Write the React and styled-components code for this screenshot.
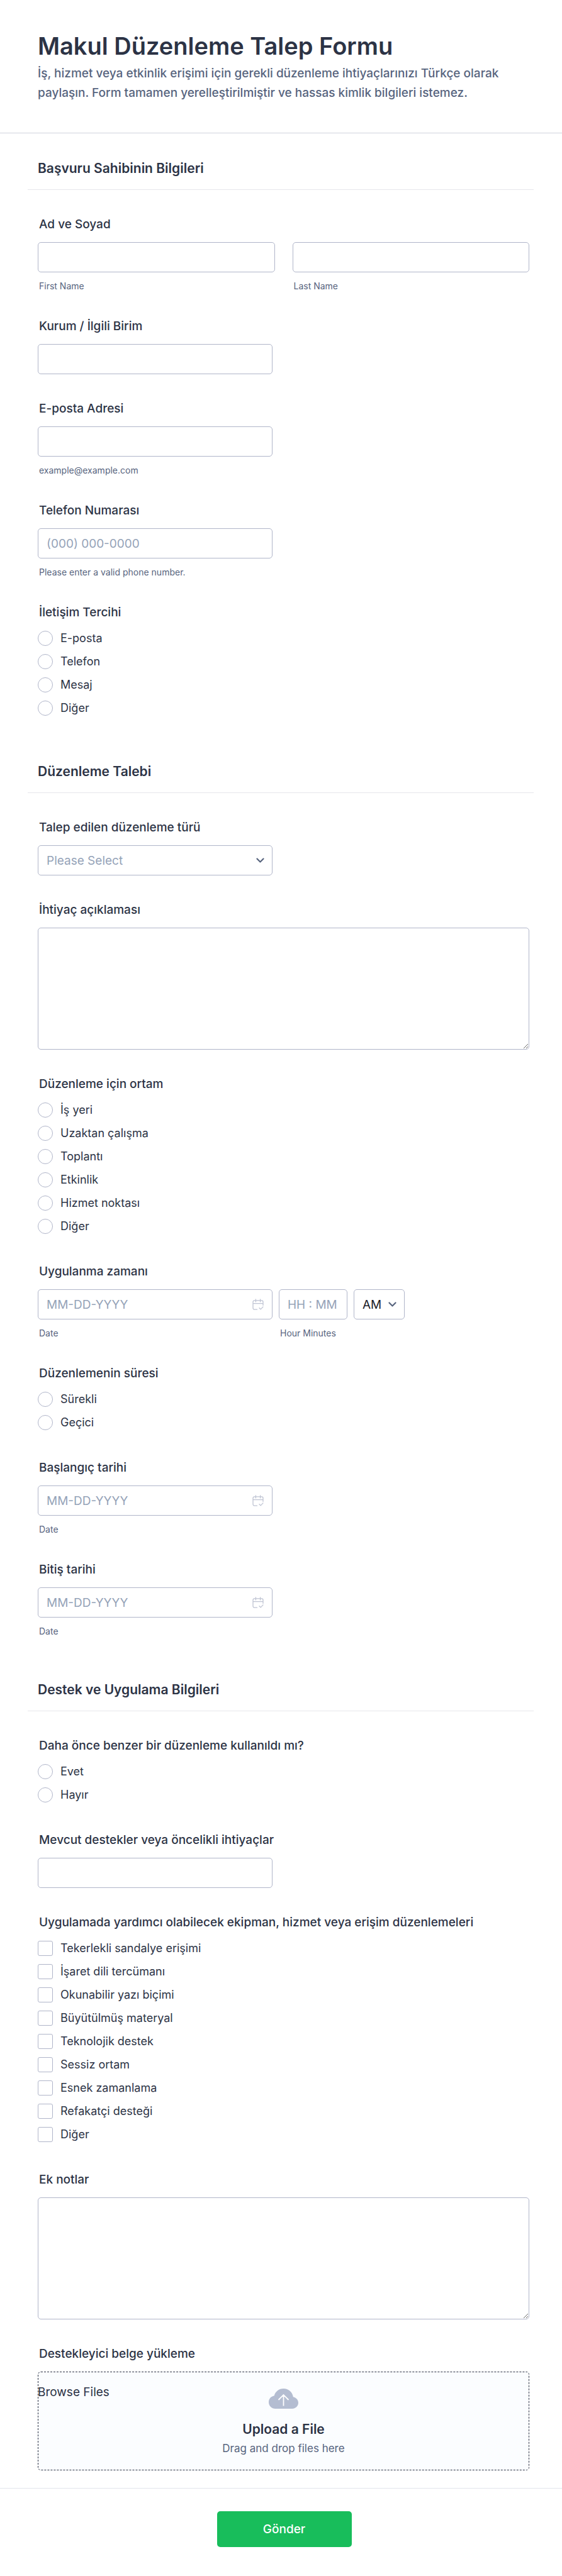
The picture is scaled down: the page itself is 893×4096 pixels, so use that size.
import React from 'react'
import styled, { createGlobalStyle } from 'styled-components'

const contactOptions = ['E-posta', 'Telefon', 'Mesaj', 'Diğer']
const placeOptions = [
  'İş yeri',
  'Uzaktan çalışma',
  'Toplantı',
  'Etkinlik',
  'Hizmet noktası',
  'Diğer',
]
const durationOptions = ['Sürekli', 'Geçici']
const usedOptions = ['Evet', 'Hayır']
const equipmentOptions = [
  'Tekerlekli sandalye erişimi',
  'İşaret dili tercümanı',
  'Okunabilir yazı biçimi',
  'Büyütülmüş materyal',
  'Teknolojik destek',
  'Sessiz ortam',
  'Esnek zamanlama',
  'Refakatçi desteği',
  'Diğer',
]

const CalendarIcon = () => (
  <svg width='18' height='19' viewBox='0 0 18 19' fill='none'>
    <path
      d='M7.500 17.200H3.400A2.400 2.400 0 0 1 1 14.800V5a2.200 2.200 0 0 1 2.200-2.200h11.600A2.200 2.200 0 0 1 17 5v5.500M1 7.600h16M5.400 1v4M12.600 1v4M11 14.700l2.200 2.200 3.800-4'
      stroke='currentColor'
      strokeWidth='1.3'
      strokeLinecap='round'
      strokeLinejoin='round'
    />
  </svg>
)

const ChevronIcon = () => (
  <svg width='13' height='9' viewBox='0 0 13 9' fill='none'>
    <path
      d='M1.5 1.5l5 5 5-5'
      stroke='currentColor'
      strokeWidth='2.2'
      strokeLinecap='round'
      strokeLinejoin='round'
    />
  </svg>
)

const CloudIcon = () => (
  <svg width='47' height='32' viewBox='0 0 47 32' fill='none'>
    <path
      d='M10.5 32C4.7 32 0 27.4 0 21.7c0-5.300 3.600-9.600 8.700-10.300C10.300 4.800 16.300 0 23.500 0c7.900 0 14.300 5.700 15.300 13.300C43.500 14.200 47 18 47 22.600c0 5.200-4.400 9.400-9.800 9.400z'
      fill='#b4bdd1'
    />
    <path d='M23.5 27.500V10M15.500 18l8-8 8 8' stroke='#fff' strokeWidth='1.8' />
  </svg>
)

const Question = ({ id, label, hint, children }) => (
  <Field>
    <Label htmlFor={id}>{label}</Label>
    {children}
    {hint && <Hint>{hint}</Hint>}
  </Field>
)

const Choices = ({ name, label, options, type = 'radio' }) => (
  <Group>
    <Legend>{label}</Legend>
    <OptionList>
      {options.map((option) => (
        <Option key={option}>
          <Tick type={type} name={name} value={option} />
          {option}
        </Option>
      ))}
    </OptionList>
  </Group>
)

const DateBox = ({ id }) => (
  <Half>
    <Control>
      <Input id={id} type='text' placeholder='MM-DD-YYYY' />
      <IconButton type='button' aria-label='Date'>
        <CalendarIcon />
      </IconButton>
    </Control>
    <Hint>Date</Hint>
  </Half>
)

const App = () => {
  return (
    <>
      <GlobalStyle />
      <Form onSubmit={(e) => e.preventDefault()}>
        <Header>
          <h1>Makul Düzenleme Talep Formu</h1>
          <p>
            İş, hizmet veya etkinlik erişimi için gerekli düzenleme
            ihtiyaçlarınızı Türkçe olarak paylaşın. Form tamamen
            yerelleştirilmiştir ve hassas kimlik bilgileri istemez.
          </p>
        </Header>

        <Section>
          <SectionTitle>Başvuru Sahibinin Bilgileri</SectionTitle>
          <Fields>
            <Group>
              <Legend>Ad ve Soyad</Legend>
              <NameRow>
                <div>
                  <Input id='firstName' type='text' />
                  <Hint as='label' htmlFor='firstName'>
                    First Name
                  </Hint>
                </div>
                <div>
                  <Input id='lastName' type='text' />
                  <Hint as='label' htmlFor='lastName'>
                    Last Name
                  </Hint>
                </div>
              </NameRow>
            </Group>
            <Question id='unit' label='Kurum / İlgili Birim'>
              <Half>
                <Input id='unit' type='text' />
              </Half>
            </Question>
            <Question
              id='email'
              label='E-posta Adresi'
              hint='example@example.com'
            >
              <Half>
                <Input id='email' type='email' />
              </Half>
            </Question>
            <Question
              id='phone'
              label='Telefon Numarası'
              hint='Please enter a valid phone number.'
            >
              <Half>
                <Input id='phone' type='tel' placeholder='(000) 000-0000' />
              </Half>
            </Question>
            <Choices
              name='contact'
              label='İletişim Tercihi'
              options={contactOptions}
            />
          </Fields>
        </Section>

        <Section>
          <SectionTitle>Düzenleme Talebi</SectionTitle>
          <Fields>
            <Question id='kind' label='Talep edilen düzenleme türü'>
              <Half>
                <Control>
                  <Select id='kind' $muted>
                    <option>Please Select</option>
                  </Select>
                  <Arrow>
                    <ChevronIcon />
                  </Arrow>
                </Control>
              </Half>
            </Question>
            <Question id='need' label='İhtiyaç açıklaması'>
              <TextArea id='need' />
            </Question>
            <Choices
              name='place'
              label='Düzenleme için ortam'
              options={placeOptions}
            />
            <Question id='applyDate' label='Uygulanma zamanı'>
              <TimeRow>
                <DateBox id='applyDate' />
                <TimeBox>
                  <Input id='applyTime' type='text' placeholder='HH : MM' />
                  <Hint as='label' htmlFor='applyTime'>
                    Hour Minutes
                  </Hint>
                </TimeBox>
                <PeriodBox>
                  <Select aria-label='AM/PM'>
                    <option>AM</option>
                    <option>PM</option>
                  </Select>
                  <Arrow>
                    <ChevronIcon />
                  </Arrow>
                </PeriodBox>
              </TimeRow>
            </Question>
            <Choices
              name='duration'
              label='Düzenlemenin süresi'
              options={durationOptions}
            />
            <Question id='startDate' label='Başlangıç tarihi'>
              <DateBox id='startDate' />
            </Question>
            <Question id='endDate' label='Bitiş tarihi'>
              <DateBox id='endDate' />
            </Question>
          </Fields>
        </Section>

        <Section>
          <SectionTitle>Destek ve Uygulama Bilgileri</SectionTitle>
          <Fields>
            <Choices
              name='used'
              label='Daha önce benzer bir düzenleme kullanıldı mı?'
              options={usedOptions}
            />
            <Question
              id='support'
              label='Mevcut destekler veya öncelikli ihtiyaçlar'
            >
              <Half>
                <Input id='support' type='text' />
              </Half>
            </Question>
            <Choices
              name='equipment'
              type='checkbox'
              label='Uygulamada yardımcı olabilecek ekipman, hizmet veya erişim düzenlemeleri'
              options={equipmentOptions}
            />
            <Question id='notes' label='Ek notlar'>
              <TextArea id='notes' />
            </Question>
            <Question id='file' label='Destekleyici belge yükleme'>
              <Upload>
                <Browse type='button'>Browse Files</Browse>
                <CloudIcon />
                <strong>Upload a File</strong>
                <span>Drag and drop files here</span>
                <input id='file' type='file' />
              </Upload>
            </Question>
          </Fields>
        </Section>

        <Footer>
          <Submit type='submit'>Gönder</Submit>
        </Footer>
      </Form>
    </>
  )
}

const GlobalStyle = createGlobalStyle`
  * {
    box-sizing: border-box;
  }

  body {
    margin: 0;
    background: #fff;
    color: #2c3345;
    font-family: Inter, 'Liberation Sans', sans-serif;
  }

  input,
  select,
  textarea,
  button {
    font-family: inherit;
  }
`

const Form = styled.form`
  width: 100%;
  background: #fff;
`

const Header = styled.header`
  padding: 48px 60px;
  border-bottom: 1px solid #d0d2dd;

  h1 {
    margin: 0 0 3px;
    font-size: 38px;
    line-height: 50px;
    font-weight: 600;
  }

  p {
    margin: 0;
    font-size: 19px;
    line-height: 31px;
    font-weight: 500;
    color: #57647e;
  }
`

const Section = styled.section`
  padding: 0 45px 28px 44px;
`

const SectionTitle = styled.h2`
  margin: 0;
  padding: 45px 16px 22px;
  border-bottom: 1px solid #e6e6ec;
  font-size: 21px;
  line-height: 22px;
  font-weight: 600;
`

const Fields = styled.div`
  display: grid;
  gap: 43px;
  padding: 43px 7px 0 16px;
`

const Field = styled.div`
  min-width: 0;
`

const Group = styled.fieldset`
  min-width: 0;
  margin: 0;
  padding: 0;
  border: 0;
`

const Label = styled.label`
  display: block;
  margin-bottom: 17px;
  padding-left: 2px;
  font-size: 19px;
  line-height: 23px;
  font-weight: 500;
`

const Legend = styled.legend`
  display: block;
  margin-bottom: 17px;
  padding: 0 0 0 2px;
  font-size: 19px;
  line-height: 23px;
  font-weight: 500;
`

const Hint = styled.span`
  display: block;
  margin-top: 13px;
  padding-left: 2px;
  font-size: 14px;
  line-height: 18px;
  white-space: nowrap;
  color: #57647e;
`

const NameRow = styled.div`
  display: grid;
  grid-template-columns: 1fr 1fr;
  gap: 28px;
`

const TimeRow = styled.div`
  display: flex;
  gap: 10px;
`

const Half = styled.div`
  flex: none;
  width: 373px;
  max-width: 100%;
`

const TimeBox = styled.div`
  width: 109px;
`

const Control = styled.div`
  position: relative;
`

const PeriodBox = styled(Control)`
  width: 81px;
`

const Input = styled.input`
  display: block;
  width: 100%;
  height: 48px;
  padding: 0 13px;
  border: 1px solid #b0b5c9;
  border-radius: 5px;
  background: #fff;
  color: #2c3345;
  font-size: 19px;

  &::placeholder {
    color: #95a3b8;
    opacity: 1;
  }
`

const Select = styled.select`
  appearance: none;
  display: block;
  width: 100%;
  height: 48px;
  padding: 0 13px;
  border: 1px solid #b0b5c9;
  border-radius: 5px;
  background: #fff;
  color: ${({ $muted }) => ($muted ? '#95a3b8' : '#1b1c28')};
  font-size: 19px;
`

const Arrow = styled.span`
  position: absolute;
  top: 0;
  right: 13px;
  height: 48px;
  display: flex;
  align-items: center;
  color: #57647e;
  pointer-events: none;
`

const IconButton = styled.button`
  position: absolute;
  top: 0;
  right: 14px;
  height: 48px;
  padding: 0;
  border: 0;
  display: flex;
  align-items: center;
  background: none;
  color: #bfc4d3;
`

const TextArea = styled.textarea`
  display: block;
  width: 100%;
  height: 194px;
  padding: 13px;
  border: 1px solid #b0b5c9;
  border-radius: 5px;
  font-size: 19px;
  resize: vertical;
`

const OptionList = styled.div`
  display: grid;
  justify-items: start;
  gap: 13px;
  padding: 1px 0 5px;
`

const Option = styled.label`
  display: flex;
  align-items: center;
  gap: 12px;
  font-size: 18px;
  line-height: 24px;
`

const Tick = styled.input`
  appearance: none;
  flex: none;
  width: 24px;
  height: 24px;
  margin: 0;
  border: 1px solid #b0b5c9;
  border-radius: ${({ type }) => (type === 'radio' ? '50%' : '3px')};
  background: #fff;

  &:checked {
    background: #2e69ff;
  }
`

const Upload = styled.div`
  position: relative;
  display: flex;
  flex-direction: column;
  align-items: center;
  height: 157px;
  padding-top: 26px;
  border: 1px dashed #2c3345;
  border-radius: 5px;
  background: #fbfdff;

  strong {
    margin-top: 20px;
    font-size: 21px;
    line-height: 26px;
    font-weight: 600;
  }

  span {
    margin-top: 6px;
    font-size: 17px;
    line-height: 22px;
    color: #57647e;
  }

  input {
    position: absolute;
    inset: 0;
    width: 100%;
    opacity: 0;
  }
`

const Browse = styled.button`
  position: absolute;
  top: 20px;
  left: -1px;
  padding: 0;
  border: 0;
  background: none;
  color: #2c3345;
  font-size: 19px;
  line-height: 23px;
`

const Footer = styled.footer`
  display: flex;
  justify-content: center;
  padding: 36px 0 46px 10px;
  border-top: 1px solid #e3e4ec;
`

const Submit = styled.button`
  width: 214px;
  height: 57px;
  border: 0;
  border-radius: 5px;
  background: #18bd5b;
  color: #fff;
  font-size: 19px;
  font-weight: 500;
`

export default App
